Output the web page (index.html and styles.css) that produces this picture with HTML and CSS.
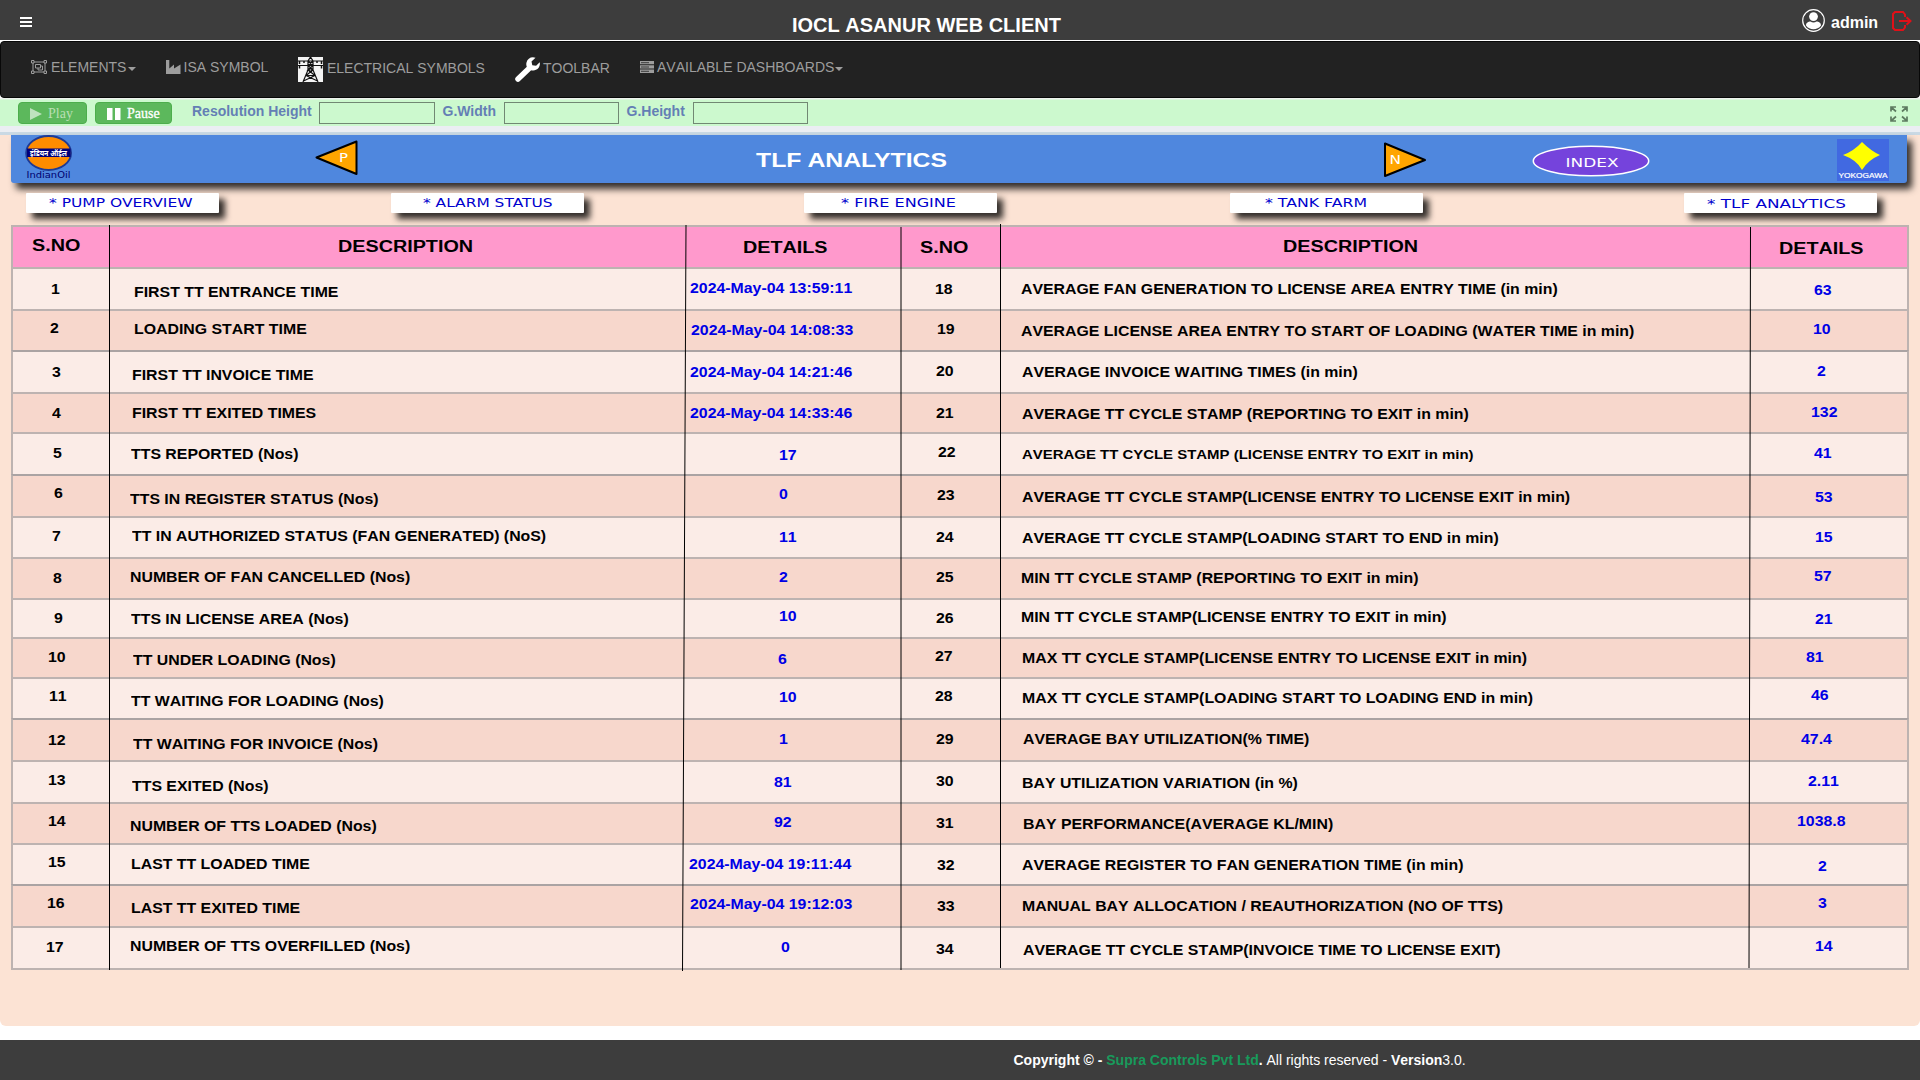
FILE: index.html
```html
<!DOCTYPE html>
<html lang="en">
<head>
<meta charset="utf-8">
<title>IOCL ASANUR WEB CLIENT</title>
<link rel="stylesheet" href="styles.css">
</head>
<body>
<header class="topbar">
  <span class="burger"><i></i><i></i><i></i></span>
  <h1 class="app-title">IOCL ASANUR WEB CLIENT</h1>
  <div class="user">
    <svg width="23" height="23" viewBox="0 0 23 23"><circle cx="11.5" cy="11.5" r="10.8" fill="none" stroke="#fff" stroke-width="1.2"/><circle cx="11.5" cy="7.6" r="4.4" fill="#fff"/><path d="M4 16.500c0-3 2.500-4 4.500-4 1.800 1.200 4.200 1.200 6 0 2 0 4.500 1 4.500 4-3.500 5-11.500 5-15 0z" fill="#fff"/></svg>
    <span class="user-name">admin</span>
    <svg class="logout" width="21" height="20" viewBox="0 0 21 20" fill="none" stroke="#e01018" stroke-width="2"><path d="M13 6V3.500L11 1H3L1 3v14l2 2h8l2-2.500V14"/><path d="M7 10h11M14.500 6.200L18.500 10l-4 3.800"/></svg>
  </div>
</header>

<nav class="navbar">
  <a class="nav-item nav-elements">
    <svg width="16" height="14" viewBox="0 0 16 14" fill="none" stroke="#9d9d9d"><path d="M2 2h12v10H2z"/><path d="M4.500 4.500h5v3.500h-5z M7 8v2h4.500V6H9.500"/><path fill="#222" d="M.5.5h2.500V3H.5zM13 .5h2.500V3H13zM.5 11h2.500v2.500H.5zM13 11h2.500v2.500H13z"/></svg>
    <span>ELEMENTS</span><b class="caret"></b>
  </a>
  <a class="nav-item nav-isa">
    <svg width="15" height="14" viewBox="0 0 15 14"><path fill="#9d9d9d" d="M0 14V0h3.300v8.500L8 4.500v4l6.500-4V14z"/></svg>
    <span>ISA SYMBOL</span>
  </a>
  <a class="nav-item nav-electrical">
    <svg width="25" height="25" viewBox="0 0 25 25" fill="none" stroke="#111" stroke-width="1.200"><path fill="#f4f4f4" stroke="none" d="M0 0h25v25H0z"/><path d="M12.500 0L10 4v9L5 25M12.500 0L15 4v9l5 12M0 4h25M0 8.500h25M10 4l5 4.500M15 4l-5 4.500M10 8.500l5 4.500M15 8.500L10 13h5M10 13l7 5.500M15 13l-7 5.500M8 18.500h9M8 18.500L19.500 24M17 18.500L5.500 24"/><path d="M1.500 4v3M23.500 4v3M1.500 8.500v3M23.500 8.500v3M6 4v2M19 4v2" stroke-width="1.500"/></svg>
    <span>ELECTRICAL SYMBOLS</span>
  </a>
  <a class="nav-item nav-toolbar">
    <svg width="25" height="25" viewBox="0 0 25 25"><path d="M3 22L14 11.500" stroke="#fff" stroke-width="5.500" stroke-linecap="round"/><path fill="#fff" d="M20.500.8L16.500 4.500l.8 3.700 3.800.6 3.600-3.600c1 4.300-2 8.300-6.300 8.300-5 0-8-4-6.900-8C12.500 1.500 16.500-.8 20.500.8z"/></svg>
    <span>TOOLBAR</span>
  </a>
  <a class="nav-item nav-dash">
    <svg width="14" height="12" viewBox="0 0 14 12"><path fill="#9d9d9d" d="M0 0h14v3.300H0zM0 4.300h14v3.300H0zM0 8.600h14V12H0z"/><path stroke="#222" stroke-width=".8" d="M1 1.700h8M1 6h8M1 10.300h8"/></svg>
    <span>AVAILABLE DASHBOARDS</span><b class="caret"></b>
  </a>
</nav>

<section class="controls">
  <button class="btn btn-play" disabled><svg width="12" height="12" viewBox="0 0 12 12"><path fill="#fff" d="M0 0l12 6-12 6z"/></svg>Play</button>
  <button class="btn btn-pause"><svg width="14" height="12" viewBox="0 0 14 12"><path fill="#fff" d="M0 0h5.500v12H0zM8 0h5.500v12H8z"/></svg>Pause</button>
  <label class="field-label label-res">Resolution Height</label><input class="field field-res">
  <label class="field-label label-w">G.Width</label><input class="field">
  <label class="field-label label-h">G.Height</label><input class="field">
  <svg class="expand" width="18" height="16" viewBox="0 0 18 16" fill="none" stroke="#5d7a60" stroke-width="1.700"><path d="M1 5.500V1h5M1 1l5 4.500M12 1h5v4.500M17 1l-5 4.500M1 10.500V15h5M1 15l5-4.500M12 15h5v-4.500M17 15l-5-4.500"/></svg>
</section>

<main class="canvas">
  <div class="banner">
    <svg class="banner-art" width="1896" height="47" viewBox="11 135 1896 47">
      <g class="indianoil">
        <ellipse cx="48.600" cy="153" rx="22.500" ry="17" fill="#ff8c00" stroke="#1f3a93" stroke-width="1.800"/>
        <path fill="#00007a" d="M27 148.500h43.500v8.500H27z"/>
        <text class="hindi" x="30" y="155.500" textLength="37" lengthAdjust="spacingAndGlyphs">इंडियन ऑईल</text>
        <text class="oil" x="26.500" y="178" textLength="44" lengthAdjust="spacingAndGlyphs">IndianOil</text>
      </g>
      <g fill="#ffa500" stroke="#000" stroke-width="2" stroke-linejoin="round">
        <path d="M316.500 157.500L356.500 141.500v32.500z"/><path d="M1385 143.500v32.500l40-16z"/>
      </g>
      <text class="arrow-label" x="339" y="162" textLength="9" lengthAdjust="spacingAndGlyphs">P</text>
      <text class="arrow-label" x="1389.500" y="163.500" textLength="11.500" lengthAdjust="spacingAndGlyphs">N</text>
      <text class="page-title" x="756" y="166.500" textLength="191" lengthAdjust="spacingAndGlyphs">TLF ANALYTICS</text>
      <ellipse cx="1591" cy="161" rx="57.700" ry="14.800" fill="#7543dc" stroke="#fff" stroke-width="1.500"/>
      <text class="index" x="1565.500" y="167" textLength="53" lengthAdjust="spacingAndGlyphs">INDEX</text>
      <path fill="#4169e1" d="M1837 139h52v42h-52z"/>
      <path fill="#ff0" d="M1862 142Q1871 151 1880 155Q1868 160 1862 170Q1857 160 1843 155Q1854 151 1862 142z"/>
      <text class="yoko" x="1838.500" y="178" textLength="49" lengthAdjust="spacingAndGlyphs">YOKOGAWA</text>
    </svg>
  </div>
  <div class="tabs">
    <a class="tab"><svg width="193" height="20"><text x="23" y="14" textLength="143.500" lengthAdjust="spacingAndGlyphs">* PUMP OVERVIEW</text></svg></a>
    <a class="tab"><svg width="193" height="20"><text x="32" y="14" textLength="129.500" lengthAdjust="spacingAndGlyphs">* ALARM STATUS</text></svg></a>
    <a class="tab"><svg width="193" height="20"><text x="37" y="14" textLength="115" lengthAdjust="spacingAndGlyphs">* FIRE ENGINE</text></svg></a>
    <a class="tab"><svg width="193" height="20"><text x="35" y="14" textLength="102" lengthAdjust="spacingAndGlyphs">* TANK FARM</text></svg></a>
    <a class="tab"><svg width="193" height="20"><text x="23" y="15" textLength="139" lengthAdjust="spacingAndGlyphs">* TLF ANALYTICS</text></svg></a>
  </div>
  <div class="sheet">
    <div id="rows"></div>
    <svg class="rules" width="1898" height="747" viewBox="11 224 1898 747" stroke="#000" stroke-width="1">
      <path d="M109.500 225V970M686 225L682.500 971M901 227V970M1000.500 224V968M1750.500 227L1749 968"/>
    </svg>
  </div>
</main>

<footer class="footer"><p><b>Copyright © - <span class="company">Supra Controls Pvt Ltd</span>.</b> All rights reserved - <b>Version</b>3.0.</p></footer>
<script src="rows.js"></script>
</body>
</html>
```
FILE: styles.css
```css
* { box-sizing: border-box; }
body {
  margin: 0;
  width: 1920px;
  height: 1080px;
  overflow: hidden;
  background: #fff;
  font-family: "Liberation Sans", Arial, sans-serif;
  font-size: 14px;
  display: flex;
  flex-direction: column;
}
svg { display: block; flex: none; }

.topbar { height: 40px; background: #3d3d3d; color: #fff; display: flex; flex: none; }
.burger { width: 12px; margin: 17px 0 0 20px; display: flex; flex-direction: column; gap: 2px; }
.burger i { height: 2px; background: #fff; }
.app-title { margin: 14px 0 0 760px; width: 276px; font-size: 20px; line-height: 23px; white-space: nowrap; font-kerning: none; }
.user { margin-left: auto; padding: 9px 7px 0 0; display: flex; }
.user-name { margin: 5px 13px 0 6px; width: 48px; font-size: 16px; line-height: 18px; font-weight: bold; }
.logout { margin-top: 2px; }

.navbar {
  flex: none;
  margin-top: 1px;
  height: 57px;
  background: #222;
  border: 1px solid #080808;
  border-radius: 4px;
  display: flex;
  color: #9d9d9d;
  padding-left: 30px;
  font-kerning: none;
}
.nav-item { display: flex; align-items: flex-start; white-space: nowrap; line-height: 16px; padding-top: 17px; gap: 4px; }
.nav-item svg { margin-top: 1px; }
.nav-elements { width: 135px; }
.nav-isa { width: 132px; }
.nav-isa svg { margin-right: -1.500px; }
.nav-electrical { width: 217px; padding-top: 18px; gap: 4px; }
.nav-electrical svg, .nav-toolbar svg { margin-top: -3px; }
.nav-toolbar { width: 125px; padding-top: 18px; gap: 3px; }
.nav-dash { gap: 3px; }
.nav-dash svg { margin-top: 2px; }
.caret { border: 4px solid transparent; border-top-color: #9d9d9d; border-bottom: 0; margin: 8px 0 0 -2px; }

.controls {
  flex: none;
  height: 37px;
  display: flex;
  align-items: flex-start;
  padding: 4px 12px 0 18px;
  background: linear-gradient(#eef3ee 0 1px, #ccf9ce 2px 28px, #ebeef3 28px 34px, #cad9e4 34px);
}
.btn {
  height: 22px;
  border: 1px solid #4cae4c;
  border-radius: 4px;
  background: #5cb85c;
  color: #fff;
  font: 14px/18px "Liberation Serif", "Times New Roman", serif;
  display: flex;
  align-items: center;
  gap: 6px;
  padding: 1px 0 0 11px;
}
.btn-play { width: 69px; color: #b9dfb4; }
.btn-play svg { opacity: .6; }
.btn-pause { width: 77px; margin-left: 8px; -webkit-text-stroke: .3px #fff; }
.field-label { color: #647fb5; font-weight: bold; line-height: 18px; white-space: nowrap; margin-left: 8px; }
.label-res { width: 120px; margin-left: 20px; }
.label-w { width: 53px; }
.label-h { width: 58px; margin-left: 7.500px; }
.field { width: 115.500px; height: 22px; margin-left: 8px; padding: 0; background: transparent; border: 1px solid #718873; }
.field-res { margin-left: 7px; }
.expand { margin: 4px 0 0 auto; }

.canvas { flex: none; height: 891px; background: #fce3d4; border-radius: 0 0 6px 6px; padding-left: 11px; }
.banner { width: 1896px; height: 48px; background: #4f87de; border-radius: 0 0 3px 3px; box-shadow: 5px 6px 7px rgba(0, 0, 0, .8); }
.hindi { font: bold 7.500px "Noto Sans Devanagari", "Noto Sans", sans-serif; fill: #fff; }
.oil { font: 9.500px "DejaVu Sans", sans-serif; fill: #00006e; }
.arrow-label { font: 12px "DejaVu Sans", sans-serif; fill: #fff; }
.page-title { font: bold 20px "Liberation Sans", sans-serif; fill: #fff; }
.index { font: 12.500px "DejaVu Sans", sans-serif; fill: #fff; }
.yoko { font: 7.200px "Liberation Sans", sans-serif; fill: #fff; stroke: #fff; stroke-width: .2px; }

.tabs { display: grid; grid-template-columns: 365px 412.500px 426.500px 454px 193px; padding: 10px 0 0 15px; }
.tab { width: 193px; height: 20px; background: #fff; border-radius: 1px; box-shadow: 6px 6px 6px rgba(0, 0, 0, .8); }
.tab text { font: 12.500px "DejaVu Sans", sans-serif; fill: #0000cd; }

.sheet { position: relative; width: 1898px; margin-top: 12px; }
.rules { position: absolute; left: 0; top: -1px; pointer-events: none; }
.row {
  display: grid;
  grid-template-columns: 96px 576px 216px 99px 750px 1fr;
  border: solid #bdb3b1;
  border-width: 2px 2px 0;
  background: #fbece7;
}
.row:nth-child(odd) { background: #f7d7cc; }
.row:first-child { background: #ff99cc; }
.row:last-child { border-bottom-width: 2px; }
.row.heavy { border-top-color: #aaa3a3; }
.cell { white-space: nowrap; font-weight: bold; line-height: 18px; font-kerning: none; color: #000; }
.cell span { display: inline-block; transform: scaleX(1.133); transform-origin: 0 0; }
.cell.value { color: #0000e6; }
.cell.small { font-size: 13.200px; }
.row:first-child .cell { font-size: 16px; color: #000; }
.row:first-child .cell span { transform: scaleX(1.235); }

.footer { flex: none; margin-top: 14px; height: 40px; background: #3d3d3d; color: #fff; padding: 12px 0 0 1013.500px; }
.footer p { margin: 0; line-height: 16px; font-kerning: none; white-space: nowrap; }
.company { color: #189a5b; }
```
FILE: rows.js
```js
// Column origins and row tops of the sheet, in canvas units.
const columns = [13, 109, 685, 901, 1000, 1750];
const tops = [225, 267, 309, 350, 392, 432, 474, 516, 557, 598, 637, 677, 718, 760, 802, 843, 884, 926, 970];
const heavy = [3, 6, 12, 16];

// Every label carries its own anchor: text, left, baseline.
const rows = [
  [["S.NO",32,252],["DESCRIPTION",337.5,253],["DETAILS",742.5,254],["S.NO",920,254],["DESCRIPTION",1283,253],["DETAILS",1779,255]],
  [["1",51,294],["FIRST TT ENTRANCE TIME",133.5,297],["2024-May-04 13:59:11",690,293],["18",935,294],["AVERAGE FAN GENERATION TO LICENSE AREA ENTRY TIME (in min)",1021,294],["63",1814,295]],
  [["2",50,333],["LOADING START TIME",134,334],["2024-May-04 14:08:33",690.5,335],["19",936.5,334],["AVERAGE LICENSE AREA ENTRY TO START OF LOADING (WATER TIME in min)",1021,336],["10",1812.5,334]],
  [["3",51.5,377],["FIRST TT INVOICE TIME",132,380],["2024-May-04 14:21:46",690,377],["20",936,376],["AVERAGE INVOICE WAITING TIMES (in min)",1021.5,377],["2",1816.5,376]],
  [["4",51.5,418],["FIRST TT EXITED TIMES",132,418],["2024-May-04 14:33:46",689.5,418],["21",936,418],["AVERAGE TT CYCLE STAMP (REPORTING TO EXIT in min)",1021.5,419],["132",1810.5,417]],
  [["5",52.5,458],["TTS REPORTED (Nos)",131,459],["17",778.5,460],["22",937.5,457],["AVERAGE TT CYCLE STAMP (LICENSE ENTRY TO EXIT in min)",1021.5,460],["41",1814,458]],
  [["6",53.5,498],["TTS IN REGISTER STATUS (Nos)",130,504],["0",779,499],["23",936.5,500],["AVERAGE TT CYCLE STAMP(LICENSE ENTRY TO LICENSE EXIT in min)",1021.5,502],["53",1815,502]],
  [["7",52,541],["TT IN AUTHORIZED STATUS (FAN GENERATED) (NoS)",131.5,541],["11",778.5,542],["24",936,542],["AVERAGE TT CYCLE STAMP(LOADING START TO END in min)",1021.5,543],["15",1814.5,542]],
  [["8",52.5,583],["NUMBER OF FAN CANCELLED (Nos)",130,582],["2",779,582],["25",936,582],["MIN TT CYCLE STAMP (REPORTING TO EXIT in min)",1021,583],["57",1814,581]],
  [["9",53.5,623],["TTS IN LICENSE AREA (Nos)",131,624],["10",778.5,621],["26",935.5,623],["MIN TT CYCLE STAMP(LICENSE ENTRY TO EXIT in min)",1021,622],["21",1815,624]],
  [["10",48,662],["TT UNDER LOADING (Nos)",133,665],["6",778,664],["27",935,661],["MAX TT CYCLE STAMP(LICENSE ENTRY TO LICENSE EXIT in min)",1022,663],["81",1806,662]],
  [["11",48.5,701],["TT WAITING FOR LOADING (Nos)",131,706],["10",779,702],["28",935,701],["MAX TT CYCLE STAMP(LOADING START TO LOADING END in min)",1022,703],["46",1810.5,700]],
  [["12",47.5,745],["TT WAITING FOR INVOICE (Nos)",133,749],["1",779,744],["29",936,744],["AVERAGE BAY UTILIZATION(% TIME)",1022.5,744],["47.4",1801,744]],
  [["13",48,785],["TTS EXITED (Nos)",131.5,791],["81",773.5,787],["30",935.5,786],["BAY UTILIZATION VARIATION (in %)",1021.5,788],["2.11",1807.5,786]],
  [["14",48,826],["NUMBER OF TTS LOADED (Nos)",130,831],["92",773.5,827],["31",936,828],["BAY PERFORMANCE(AVERAGE KL/MIN)",1022.5,829],["1038.8",1797,826]],
  [["15",47.5,867],["LAST TT LOADED TIME",131,869],["2024-May-04 19:11:44",689,869],["32",937,870],["AVERAGE REGISTER TO FAN GENERATION TIME (in min)",1022,870],["2",1818,871]],
  [["16",46.5,908],["LAST TT EXITED TIME",131,913],["2024-May-04 19:12:03",689.5,909],["33",936.5,911],["MANUAL BAY ALLOCATION / REAUTHORIZATION (NO OF TTS)",1021.5,911],["3",1818,908]],
  [["17",45.5,952],["NUMBER OF TTS OVERFILLED (Nos)",130,951],["0",781,952],["34",935.5,954],["AVERAGE TT CYCLE STAMP(INVOICE TIME TO LICENSE EXIT)",1023,955],["14",1815,951]]
];

const host = document.getElementById("rows");
const line = 2;
rows.forEach((labels, r) => {
  const row = document.createElement("div");
  row.className = heavy.includes(r) ? "row heavy" : "row";
  row.style.height = tops[r + 1] - tops[r] + "px";
  const ascent = r === 0 ? 15 : 14;
  labels.forEach(([text, x, baseline], c) => {
    const cell = document.createElement("div");
    cell.className = "cell" + (c === 2 || c === 5 ? " value" : "") + (r === 5 && c === 4 ? " small" : "");
    cell.style.padding = `${baseline - ascent - line - tops[r]}px 0 0 ${x - columns[c]}px`;
    const label = document.createElement("span");
    label.textContent = text;
    cell.append(label);
    row.append(cell);
  });
  host.append(row);
});
```
